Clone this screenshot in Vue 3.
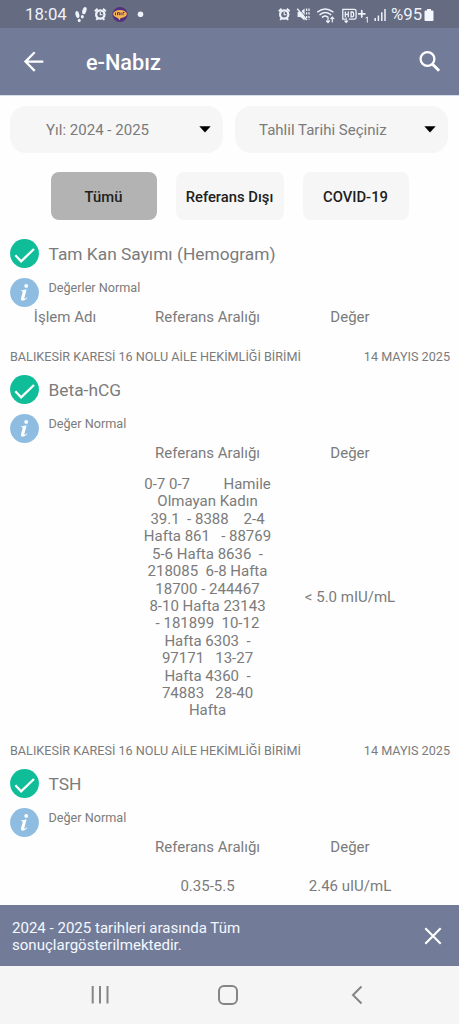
<script setup>
const filters = [
  { label: 'Yıl: 2024 - 2025', kind: 'year' },
  { label: 'Tahlil Tarihi Seçiniz', kind: 'date' },
]
const tabs = ['Tümü', 'Referans Dışı', 'COVID-19']
const unit = 'BALIKESİR KARESİ 16 NOLU AİLE HEKİMLİĞİ BİRİMİ'
const results = [
  { id: 'hemogram', name: 'Tam Kan Sayımı (Hemogram)', status: 'Değerler Normal', first: 'İşlem Adı', range: [], value: '', unit, date: '14 MAYIS 2025' },
  {
    id: 'beta',
    name: 'Beta-hCG',
    status: 'Değer Normal',
    first: '',
    range: [
      '0-7 0-7         Hamile',
      'Olmayan Kadın',
      '39.1  - 8388    2-4',
      'Hafta 861   - 88769',
      '5-6 Hafta 8636  -',
      '218085  6-8 Hafta',
      '18700 - 244467',
      '8-10 Hafta 23143',
      '- 181899  10-12',
      'Hafta 6303  -',
      '97171   13-27',
      'Hafta 4360  -',
      '74883   28-40',
      'Hafta',
    ],
    value: '< 5.0 mIU/mL',
    unit,
    date: '14 MAYIS 2025',
  },
  { id: 'tsh', name: 'TSH', status: 'Değer Normal', first: '', range: ['0.35-5.5'], value: '2.46 uIU/mL', unit: '', date: '' },
]
</script>

<template>
  <div class="screen">
    <div class="status">
      <span class="clock">18:04</span>
      <svg class="left-icons" width="74" height="20" viewBox="0 0 74 20">
        <g fill="#eef2fb">
          <ellipse cx="2.4" cy="9.6" rx="1.9" ry="3.6" transform="rotate(-13 2.4 9.6)" />
          <ellipse cx="4.2" cy="15.500" rx="1.500" ry="1.800" />
          <ellipse cx="9.400" cy="5.600" rx="2" ry="3.700" transform="rotate(17 9.400 5.600)" />
          <ellipse cx="7.300" cy="11.700" rx="1.500" ry="1.800" />
          <circle cx="65.500" cy="9.300" r="2.800" />
        </g>
        <g transform="translate(19 3)">
          <circle cx="6.300" cy="6.500" r="5.300" fill="#eef2fb" />
          <path d="M0.800 3.200 3.600 0.800M9 .8l2.800 2.400M2.200 11.800l2-2M10.400 11.800l-2-2" stroke="#eef2fb" stroke-width="1.900" />
          <circle cx="6.300" cy="6.500" r="3" fill="#656b80" />
          <path d="M6.300 4v2.700h2.200" fill="none" stroke="#eef2fb" stroke-width="1.100" />
        </g>
        <circle cx="45" cy="9.500" r="7.600" fill="#53307b" />
        <ellipse cx="45" cy="9" rx="6.900" ry="4" fill="#f5b552" />
        <path d="m42 12 2.600 3.200 1.500-3.200" fill="#f5b552" />
        <path d="M40.500 7.500v2.700M42.500 10.200V7.600h1.800v2.600M46 7.600v2.600M48 10.200V7.500h1.500" fill="none" stroke="#63334e" stroke-width="1" />
      </svg>
      <svg class="right-icons" width="112" height="20" viewBox="0 0 112 20">
        <g transform="translate(.2 3)">
          <circle cx="6" cy="6.500" r="5.200" fill="#eef2fb" />
          <path d="M.6 3.200 3.400.8M8.600.8l2.800 2.400M2 11.800l2-2M10 11.800l-2-2" stroke="#eef2fb" stroke-width="1.900" />
          <circle cx="6" cy="6.500" r="3" fill="#656b80" />
          <path d="M6 4v2.700h2.200" fill="none" stroke="#eef2fb" stroke-width="1.100" />
        </g>
        <g transform="translate(0 -1)">
          <path d="M19.600 8h2.800l4.200-3.600v12L22.400 13h-2.800z" fill="#eef2fb" />
          <path d="m20.500 4 9 11" stroke="#656b80" stroke-width="1" />
          <path d="m19.200 4.700 9.500 11.300" stroke="#eef2fb" stroke-width="1.400" />
          <path d="M28.600 4.500v11.500M31 4.500v11.500" stroke="#eef2fb" stroke-width="1.300" stroke-dasharray="2.400 1.300" />
          <g fill="none" stroke="#eef2fb" stroke-width="1.500" stroke-linecap="round">
            <path d="M39.700 7.800q7.500-5.700 15.200 0M42 10.600q5.300-4.100 10.700 0M44.500 13.200q2.700-2.100 5.100-.2" />
            <path d="M50 13v5.300M48.500 17l1.500 1.600 1.500-1.600M54.300 18v-4.800M52.800 14.700l1.500-1.600 1.500 1.600" stroke-width="1.200" />
            <path d="M67 15.200h-2.200V5.400h11.500q1.800 0 1.800 1.800v6.200q0 1.800-1.800 1.800h-5M67.300 8v4.800M70.300 8v4.800M67.300 10.400h3M73.100 8v4.800h1q1.500 0 1.500-1.600V9.600Q75.600 8 74.100 8z" stroke-width="1.300" />
            <path d="M68.200 14v4.300M66.800 17l1.400 1.400 1.400-1.400" stroke-width="1.100" />
            <path d="M80.600 9.800h6.300M83.750 6.600v6.400" stroke-width="1.700" />
            <path d="M88 14l1.300-1v5.200" stroke-width="1" />
          </g>
          <path d="M97.200 14v3M100.400 11.500v5.500M103.800 8.200v8.800M107 5v12" stroke="#eef2fb" stroke-width="1.500" />
        </g>
      </svg>
      <span class="percent">%95</span>
      <svg class="battery" width="10" height="14" viewBox="0 0 10 14">
        <path d="M3 1h4v1.500h1.500q1 0 1 1v8.500q0 1-1 1h-7q-1 0-1-1V3.500q0-1 1-1H3z" fill="#f4f7ff" />
      </svg>
    </div>

    <header class="bar">
      <svg width="22" height="22" viewBox="0 0 22 22" fill="none" stroke="#fff" stroke-width="2.200">
        <path d="M20.300 10.600H2.500M11.700 1.300 2.400 10.600l9.300 9.300" />
      </svg>
      <h1>e-Nabız</h1>
      <svg class="search" width="24" height="24" viewBox="0 0 24 24" fill="none" stroke="#fff">
        <circle cx="9.500" cy="9" r="6.900" stroke-width="2.300" />
        <path d="m14.300 14 6.800 6.800" stroke-width="2.900" />
      </svg>
    </header>

    <main>
      <div class="filters">
        <button v-for="f in filters" :key="f.kind" class="select" :class="f.kind">
          <span>{{ f.label }}</span>
          <svg width="12" height="7" viewBox="0 0 12 7"><path d="M.3.300h11.400L6 6.500z" fill="#000" /></svg>
        </button>
      </div>
      <div class="tabs">
        <button v-for="(t, i) in tabs" :key="t" :class="{ active: i === 0 }">{{ t }}</button>
      </div>

      <section v-for="r in results" :key="r.id" class="result" :class="r.id">
        <div class="title">
          <svg width="29" height="29" viewBox="0 0 29 29">
            <circle cx="14.500" cy="14.500" r="14.400" fill="#0fbd98" />
            <path d="m5.300 16.300 5.800 6L24 10" fill="none" stroke="#fff" stroke-width="2.300" />
          </svg>
          <h2>{{ r.name }}</h2>
        </div>
        <div class="info">
          <svg width="29" height="29" viewBox="0 0 29 29">
            <circle cx="14.500" cy="14.500" r="14.400" fill="#8fbde2" />
            <circle cx="16.200" cy="7.900" r="1.900" fill="#fff" />
            <path d="M11.300 12.300q2.500-.2 5.300-1l-2.300 9q-.3 1.300 2.500-.8l.5.600q-2.500 2.800-4.900 2.700-2-.2-1.400-2.500l1.700-6.300q.2-1-1.600-.9z" fill="#fff" />
          </svg>
          <span>{{ r.status }}</span>
        </div>
        <div class="cols heads">
          <span>{{ r.first }}</span><span>Referans Aralığı</span><span>Değer</span>
        </div>
        <div class="cols body">
          <span></span>
          <div><div v-for="line in r.range" :key="line">{{ line }}</div></div>
          <span>{{ r.value }}</span>
        </div>
        <div v-if="r.unit" class="place"><span>{{ r.unit }}</span><time>{{ r.date }}</time></div>
      </section>
    </main>

    <div class="toast">
      <p>2024 - 2025 tarihleri arasında Tüm<br />sonuçlargösterilmektedir.</p>
      <svg width="18" height="18" viewBox="0 0 18 18" stroke="#fff" stroke-width="2.100"><path d="m1.300 1.300 15.400 15.400M16.700 1.300 1.300 16.700" /></svg>
    </div>
    <nav>
      <svg width="20" height="20" viewBox="0 0 20 20" stroke="#858585" stroke-width="2"><path d="M2.700 1v17.500M10 1v17.500M17.500 1v17.500" /></svg>
      <svg class="home" width="20" height="20" viewBox="0 0 20 20" fill="none" stroke="#858585" stroke-width="2"><rect x="1" y="1" width="18" height="18" rx="5" /></svg>
      <svg width="12" height="20" viewBox="0 0 12 20" fill="none" stroke="#858585" stroke-width="2"><path d="M10.500 1.500 2 10l8.500 8.500" /></svg>
    </nav>
  </div>
</template>

<style>
body { background: #fefefe; overflow: hidden; }
</style>

<style scoped>
* { box-sizing: border-box; }
.screen { width: 459px; height: 1024px; display: flex; flex-direction: column; overflow: hidden; background: #fefefe; color: #7b7b7b; font-family: Roboto, "Noto Sans", sans-serif; }
svg { display: block; flex: none; }
h1, h2, p { margin: 0; font-weight: 400; }
button { border: 0; padding: 0; font: inherit; color: inherit; }
.status { height: 28px; flex: none; display: flex; align-items: center; background: #656b80; color: #eef2fb; padding-left: 25px; }
.clock { width: 50px; font-size: 16.800px; line-height: 28px; white-space: nowrap; }
.left-icons { margin-top: 1px; }
.right-icons { margin-left: 129px; margin-top: 1px; }
.percent { width: 33px; margin-left: 1px; font-size: 16.800px; white-space: nowrap; }
.battery { margin: 2px 0 0 0; }
.bar { height: 67px; flex: none; display: flex; align-items: center; padding-left: 23px; background: #727c98; color: #fff; }
.bar h1 { margin-left: 41px; margin-top: 3px; flex: 1; font-size: 21.700px; font-weight: 500; line-height: 28px; }
.search { margin-right: 17px; }
main { height: 810px; flex: none; overflow: hidden; border-top: 1px solid #d7ddea; }
.filters { display: flex; gap: 12px; padding: 10px 10px 0; }
.select { width: 213px; height: 47px; border-radius: 16px; background: #f6f6f6; display: flex; align-items: center; justify-content: space-between; font-size: 15.050px; padding-right: 12px; }
.select.year { padding-left: 36px; }
.select.date { padding-left: 24px; }
.tabs { display: flex; justify-content: center; gap: 19px; margin-top: 19px; }
.tabs button { width: 106px; height: 48px; border-radius: 8px; background: #f6f6f6; color: #202020; font-size: 14.800px; font-weight: 500; white-space: nowrap; padding-top: 2px; }
.tabs button:nth-child(2) { width: 108px; }
.tabs .active { background: #b3b3b3; }
.result { display: flex; flex-direction: column; height: 136px; }
.hemogram { margin-top: 19px; }
.beta { height: 394px; }
.title { display: flex; height: 38.500px; padding-left: 9.500px; gap: 10px; }
.title h2 { font-size: 17.350px; line-height: 31px; white-space: nowrap; }
.info { display: flex; height: 28.500px; padding-left: 9.500px; gap: 10px; font-size: 12.650px; line-height: 20px; }
.cols { display: grid; grid-template-columns: 130px 155px 130px; text-align: center; font-size: 15px; align-items: center; white-space: pre; }
.heads { line-height: 20px; height: 20px; margin-top: 1px; }
.body { line-height: 17.420px; }
.beta .body { margin-top: 13px; }
.tsh .body { margin-top: 21px; }
.place { display: flex; justify-content: space-between; margin-top: auto; height: 38px; line-height: 39px; padding: 0 9px 0 10px; font-size: 12.640px; white-space: nowrap; }
.toast { height: 61px; flex: none; display: flex; align-items: center; justify-content: space-between; padding: 0 17px 0 12px; background: #727c98; color: #f5f8ff; font-size: 15.050px; line-height: 17.500px; }
.toast p { padding-top: 3px; }
nav { flex: 1; display: flex; justify-content: space-between; align-items: center; padding: 0 96px 0 90px; background: #f5f5f5; }
.home { margin-right: 5px; }
</style>
